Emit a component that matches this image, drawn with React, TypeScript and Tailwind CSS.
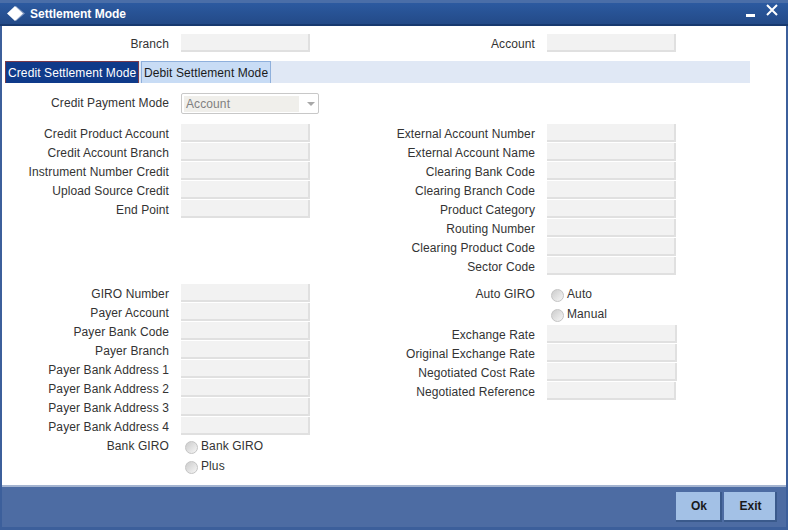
import React from "react";

const Field = ({ label, wide }: { label: string; wide?: boolean }) => (
  <div className="flex items-start h-[19px]">
    <label className="w-[169px] text-right pt-[2px] leading-[16px] text-[#333333]">{label}</label>
    <div className={`ml-[12px] h-[18px] bg-[#f2f2f2] border-r-2 border-b-2 border-[#e0e0e0] ${wide ? "w-[130px]" : "w-[129px]"}`} />
  </div>
);

const Radio = ({ label }: { label: string }) => (
  <div className="flex items-center h-[20px] text-[#333333]">
    <span className="w-[13px] h-[13px] rounded-full border border-[#c4c4c4] bg-gradient-to-br from-[#cccccc] to-[#f6f6f6]" />
    <span className="ml-[3px] -mt-[2px]">{label}</span>
  </div>
);

const App = () => {
  return (
    <div className="w-[788px] h-[530px] flex flex-col bg-[#3c5f9b] px-[2px] pb-[3px] text-[12px] tracking-[0.1px] font-['Liberation_Sans',Arial,sans-serif]">
      {/* title bar */}
      <div className="-mx-[2px] h-[26px] shrink-0 flex items-center pl-[7px] pr-[10px] border-t-[3px] border-b-2 border-t-[#4a6ea8] border-b-[#17396f] bg-gradient-to-b from-[#2c5aa0] to-[#234a88]">
        <svg width="18" height="15" viewBox="0 0 18 15">
          <path d="M9 0 L18 7.5 L9 15 Z" fill="#7f96bf" />
          <path d="M8 0 L16 7.5 L8 15 L0 7.5 Z" fill="#ffffff" />
        </svg>
        <span className="ml-[5px] font-bold text-white tracking-normal">Settlement Mode</span>
        <div className="ml-auto flex items-start gap-[11px]">
          <span className="mt-[3px] w-[9px] h-[3px] bg-white" />
          <svg width="12" height="12" viewBox="0 0 12 12" className="-mt-[7px]">
            <path d="M1 1 L11 11 M11 1 L1 11" stroke="#ffffff" strokeWidth="2" />
          </svg>
        </div>
      </div>

      {/* body */}
      <div className="flex-1 bg-white flex flex-col pt-[8px]">
        <div className="flex">
          <div className="w-[366px] -ml-[2px]"><Field label="Branch" /></div>
          <Field label="Account" />
        </div>

        {/* tabs */}
        <div className="mt-[8px] ml-[3px] w-[745px] h-[22px] flex bg-[#e0e8f5]">
          <div className="w-[134px] pl-[2px] leading-[22px] text-white bg-[#0f3a8a] border border-[#7a3a4a] border-b-0 whitespace-nowrap">Credit Settlement Mode</div>
          <div className="ml-[2px] w-[130px] pl-[2px] leading-[22px] text-[#1a1a1a] bg-[#c8dcf5] border border-[#8fb0dc] border-b-0 whitespace-nowrap">Debit Settlement Mode</div>
        </div>

        {/* credit payment mode */}
        <div className="mt-[10px] flex items-start h-[31px]">
          <label className="w-[167px] text-right leading-[20px] text-[#333333]">Credit Payment Mode</label>
          <div className="ml-[12px] w-[138px] h-[21px] flex items-center border border-[#c8c8c8] rounded-[2px] bg-white pl-[2px]">
            <span className="w-[115px] h-[16px] pl-[2px] leading-[16px] bg-[#f0efeb] text-[#808080]">Account</span>
            <span className="ml-[8px] w-0 h-0 border-x-[4px] border-t-[4px] border-x-transparent border-t-[#a8a8a8]" />
          </div>
        </div>

        {/* account details */}
        <div className="flex h-[160px]">
          <div className="w-[366px] -ml-[2px]">
            <Field label="Credit Product Account" />
            <Field label="Credit Account Branch" />
            <Field label="Instrument Number Credit" />
            <Field label="Upload Source Credit" />
            <Field label="End Point" />
          </div>
          <div>
            <Field label="External Account Number" />
            <Field label="External Account Name" />
            <Field label="Clearing Bank Code" />
            <Field label="Clearing Branch Code" />
            <Field label="Product Category" />
            <Field label="Routing Number" />
            <Field label="Clearing Product Code" />
            <Field label="Sector Code" />
          </div>
        </div>

        {/* giro */}
        <div className="flex">
          <div className="w-[366px] -ml-[2px]">
            <Field label="GIRO Number" />
            <Field label="Payer Account" />
            <Field label="Payer Bank Code" />
            <Field label="Payer Branch" />
            <Field label="Payer Bank Address 1" />
            <Field label="Payer Bank Address 2" />
            <Field label="Payer Bank Address 3" />
            <Field label="Payer Bank Address 4" />
            <div className="flex mt-[1px]">
              <label className="w-[169px] text-right leading-[18px] text-[#333333]">Bank GIRO</label>
              <div className="ml-[16px]">
                <Radio label="Bank GIRO" />
                <Radio label="Plus" />
              </div>
            </div>
          </div>
          <div>
            <div className="flex pt-[1px]">
              <label className="w-[169px] text-right leading-[18px] text-[#333333]">Auto GIRO</label>
              <div className="ml-[16px]">
                <Radio label="Auto" />
                <Radio label="Manual" />
              </div>
            </div>
            <Field label="Exchange Rate" wide />
            <Field label="Original Exchange Rate" wide />
            <Field label="Negotiated Cost Rate" wide />
            <Field label="Negotiated Reference" />
          </div>
        </div>
      </div>

      {/* footer */}
      <div className="h-[42px] shrink-0 flex items-start justify-end pt-[5px] pr-[9px] gap-[2px] border-t-2 border-t-[#a4b4d0] bg-[#4d6ca3]">
        <button className="w-[46px] h-[30px] pl-[2px] bg-[#a3c1e6] border-r-2 border-b-2 border-[#3a5a8c] font-bold text-[#1a1a1a] tracking-normal">Ok</button>
        <button className="w-[53px] h-[30px] pl-[2px] bg-[#a3c1e6] border-r-2 border-b-2 border-[#3a5a8c] font-bold text-[#1a1a1a] tracking-normal">Exit</button>
      </div>
    </div>
  );
};

export default App;
